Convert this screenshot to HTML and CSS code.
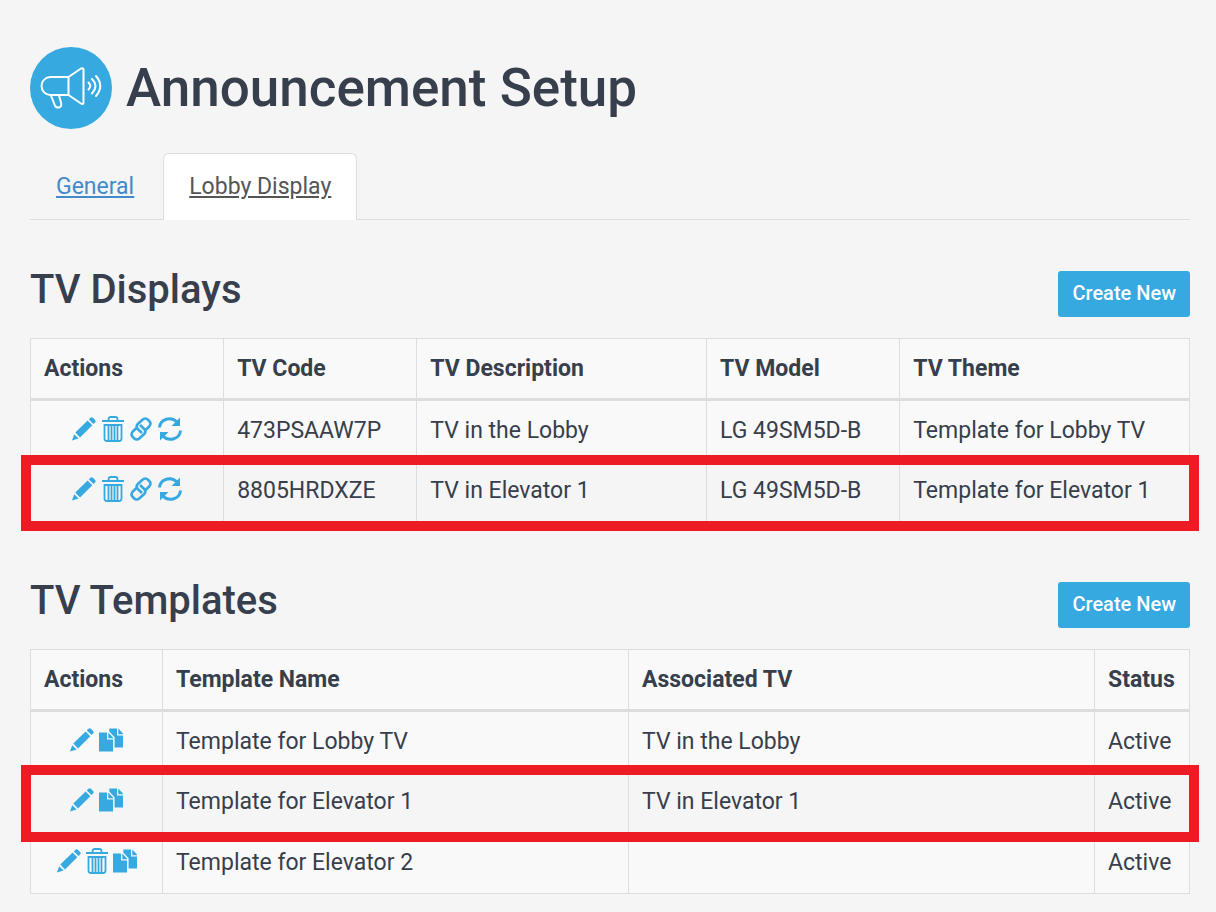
FILE: index.html
```html
<!DOCTYPE html>
<html lang="en">
<head>
  <meta charset="UTF-8">
  <meta name="viewport" content="width=device-width, initial-scale=1.0">
  <title>Announcement Setup</title>
  <link rel="stylesheet" href="styles.css">
</head>
<body>
  <!-- Icon sprite -->
  <svg class="sprite" aria-hidden="true">
    <symbol id="icon-edit" viewBox="0 0 24 24">
      <path d="M0 23.5 2.2 17.2 6.6 21.6z"/>
      <path d="M3.3 15.6 15.6 3.6 20.3 8.3 8 20.4z"/>
      <path d="M16.8 2.4 18.4.8q1.2-1.2 2.5 0l2.2 2.2q1.2 1.3 0 2.5L21.5 7.1z"/>
    </symbol>
    <symbol id="icon-trash" viewBox="0 0 22 26">
      <path d="M0 5H22M6.6 5V3Q6.6 1 8.4 1H13.6Q15.4 1 15.4 3V5M2.5 9V22.5Q2.5 25 5 25H17Q19.5 25 19.500 22.500V9zM6.500 9V25M9.500 9V25M12.500 9V25M15.500 9V25" fill="none" stroke="currentColor" stroke-width="1.8"/>
    </symbol>
    <symbol id="icon-link" viewBox="0 0 22 24">
      <path d="M12 16 7.8 12Q5.5 9.5 7.8 7L12.500 2.800Q15.300 .2 18 2.800L19.200 4Q21.800 6.500 19.200 9.500L15.500 13M10 8 14.200 12Q16.500 14.500 14.200 17L9.500 21.200Q6.700 23.800 4 21.200L2.800 20Q.2 17.500 2.800 14.500L6.500 11" fill="none" stroke="currentColor" stroke-width="2.600"/>
    </symbol>
    <symbol id="icon-refresh" viewBox="0 0 24 24">
      <path d="M1.500 10.500A10 9.500 0 0 1 19 5M22.500 13.500A10 9.500 0 0 1 5 19" fill="none" stroke="currentColor" stroke-width="3"/>
      <path d="M22 .5V9H13.500zM2 23.500V15H10.500z"/>
    </symbol>
    <symbol id="icon-copy" viewBox="0 0 24 24">
      <path d="M0 4.500H8V11.500H14V23.500H0zM9.300 4.500 14 9.600V10.200H9.300z"/>
      <path d="M10.300 .5H18V7.500H24V19.500H15.600V9.200L10.300 3.600zM19.300 .5 24 5.500V6.200H19.300z"/>
    </symbol>
  </svg>

  <div class="page">
    <header class="page-header">
      <svg class="logo" viewBox="0 0 82 82" aria-hidden="true">
        <circle cx="41" cy="41" r="41" fill="#36a9e1"/>
        <g fill="none" stroke="#fff" stroke-width="2" stroke-linejoin="round" stroke-linecap="round">
          <path d="M38.5 30H20.5A9 9 0 0 0 20.5 48H38.5zM38.5 30 51 21.500Q53.500 20.500 53.500 23V55Q53.500 58 51 56.500L38.500 48"/>
          <path d="M21 48.500 24.500 57.500C26 62.500 33 61 31 55.500L29 48.500"/>
          <path d="M58.500 35.500Q62 39 58.500 42.500M62 32Q69 39 62 46.500M66 29Q74.500 39 66 49"/>
        </g>
      </svg>
      <h1>Announcement Setup</h1>
    </header>

    <nav class="tabs">
      <a class="tab" href="#general">General</a>
      <a class="tab active" href="#lobby" aria-current="page">Lobby Display</a>
    </nav>

    <section class="panel">
      <div class="panel-header">
        <h2>TV Displays</h2>
        <button class="btn" type="button">Create New</button>
      </div>
      <table class="displays">
        <thead>
          <tr>
            <th>Actions</th>
            <th>TV Code</th>
            <th class="wide">TV Description</th>
            <th>TV Model</th>
            <th class="wide">TV Theme</th>
          </tr>
        </thead>
        <tbody>
          <tr>
            <td>
              <div class="actions">
                <button type="button" aria-label="Edit"><svg class="icon"><use href="#icon-edit"/></svg></button>
                <button type="button" aria-label="Delete"><svg class="icon trash"><use href="#icon-trash"/></svg></button>
                <button type="button" aria-label="Link"><svg class="icon link"><use href="#icon-link"/></svg></button>
                <button type="button" aria-label="Refresh"><svg class="icon"><use href="#icon-refresh"/></svg></button>
              </div>
            </td>
            <td>473PSAAW7P</td>
            <td>TV in the Lobby</td>
            <td>LG 49SM5D-B</td>
            <td>Template for Lobby TV</td>
          </tr>
          <tr class="highlight">
            <td>
              <div class="actions">
                <button type="button" aria-label="Edit"><svg class="icon"><use href="#icon-edit"/></svg></button>
                <button type="button" aria-label="Delete"><svg class="icon trash"><use href="#icon-trash"/></svg></button>
                <button type="button" aria-label="Link"><svg class="icon link"><use href="#icon-link"/></svg></button>
                <button type="button" aria-label="Refresh"><svg class="icon"><use href="#icon-refresh"/></svg></button>
              </div>
            </td>
            <td>8805HRDXZE</td>
            <td>TV in Elevator 1</td>
            <td>LG 49SM5D-B</td>
            <td>Template for Elevator 1</td>
          </tr>
        </tbody>
      </table>
    </section>

    <section class="panel">
      <div class="panel-header">
        <h2>TV Templates</h2>
        <button class="btn" type="button">Create New</button>
      </div>
      <table class="templates">
        <thead>
          <tr>
            <th class="col-actions">Actions</th>
            <th>Template Name</th>
            <th>Associated TV</th>
            <th class="col-status">Status</th>
          </tr>
        </thead>
        <tbody>
          <tr>
            <td>
              <div class="actions">
                <button type="button" aria-label="Edit"><svg class="icon"><use href="#icon-edit"/></svg></button>
                <button type="button" aria-label="Copy"><svg class="icon"><use href="#icon-copy"/></svg></button>
              </div>
            </td>
            <td>Template for Lobby TV</td>
            <td>TV in the Lobby</td>
            <td>Active</td>
          </tr>
          <tr class="highlight">
            <td>
              <div class="actions">
                <button type="button" aria-label="Edit"><svg class="icon"><use href="#icon-edit"/></svg></button>
                <button type="button" aria-label="Copy"><svg class="icon"><use href="#icon-copy"/></svg></button>
              </div>
            </td>
            <td>Template for Elevator 1</td>
            <td>TV in Elevator 1</td>
            <td>Active</td>
          </tr>
          <tr>
            <td>
              <div class="actions">
                <button type="button" aria-label="Edit"><svg class="icon"><use href="#icon-edit"/></svg></button>
                <button type="button" aria-label="Delete"><svg class="icon trash"><use href="#icon-trash"/></svg></button>
                <button type="button" aria-label="Copy"><svg class="icon"><use href="#icon-copy"/></svg></button>
              </div>
            </td>
            <td>Template for Elevator 2</td>
            <td></td>
            <td>Active</td>
          </tr>
        </tbody>
      </table>
    </section>
  </div>
</body>
</html>
```
FILE: styles.css
```css
:root {
  --bg: #f5f5f5;
  --text: #373e4c;
  --blue: #36a9e1;
  --border: #ddd;
  --red: #ed1c24;
}
* {
  box-sizing: border-box;
}
body {
  margin: 0;
  font-family: Roboto, "Liberation Sans", sans-serif;
  font-size: 23px;
  line-height: 32px;
  background-color: var(--bg);
  color: var(--text);
}
.sprite {
  display: none;
}
.page {
  padding: 47px 26px 16px 30px;
}
.page-header {
  display: flex;
  align-items: center;
  gap: 14px;
}
.logo {
  width: 82px;
  height: 82px;
}
h1, h2 {
  margin: 0;
  font-weight: 500;
}
h1 {
  font-size: 53px;
  line-height: 64px;
}
h2 {
  padding-bottom: 3px;
  font-size: 40px;
  line-height: 48px;
}
.tabs {
  display: flex;
  gap: 3px;
  margin-top: 24px;
  border-bottom: 1px solid var(--border);
}
.tab {
  padding: 17px 25px;
  margin-bottom: -1px;
  border: 1px solid transparent;
  border-bottom: none;
  border-radius: 6px 6px 0 0;
  color: #428bca;
}
.tab.active {
  background-color: #fff;
  border-color: var(--border);
  color: #555;
}
.panel {
  margin-top: 46px;
}
.panel + .panel {
  margin-top: 55px;
}
.panel-header {
  display: flex;
  justify-content: space-between;
  align-items: flex-end;
  margin-bottom: 21px;
}
.btn {
  height: 46px;
  padding: 0 14px 2px;
  border: none;
  border-radius: 3px;
  background-color: var(--blue);
  color: #fff;
  font-family: inherit;
  font-size: 20px;
  font-weight: 500;
  cursor: pointer;
}
table {
  width: 100%;
  table-layout: fixed;
  border-collapse: collapse;
}
th, td {
  height: 61px;
  padding: 0 13px;
  border: 1px solid var(--border);
  text-align: left;
  background-color: #f9f9f9;
}
th {
  font-weight: 700;
  border-bottom-width: 3px;
}
tbody tr:nth-child(even) td {
  background-color: var(--bg);
}
.displays .wide {
  width: 25%;
}
.col-actions {
  width: 132px;
}
.col-status {
  width: 95px;
}
.actions {
  display: flex;
  justify-content: center;
  align-items: center;
  gap: 5px;
  padding-bottom: 4px;
}
.displays .actions {
  gap: 6px;
}
.actions button {
  display: flex;
  padding: 0;
  border: none;
  background: none;
  color: var(--blue);
  cursor: pointer;
}
.icon {
  width: 24px;
  height: 24px;
  fill: currentColor;
}
.icon.trash {
  width: 22px;
  height: 26px;
}
.icon.link {
  width: 22px;
}

/* Red frame around the row */
.highlight {
  position: relative;
}
.highlight td:first-child::after {
  content: "";
  position: absolute;
  inset: -7px -9px -9px -10px;
  border: 10px solid var(--red);
  pointer-events: none;
}
.displays .highlight td:first-child::after {
  top: -6px;
}
```
